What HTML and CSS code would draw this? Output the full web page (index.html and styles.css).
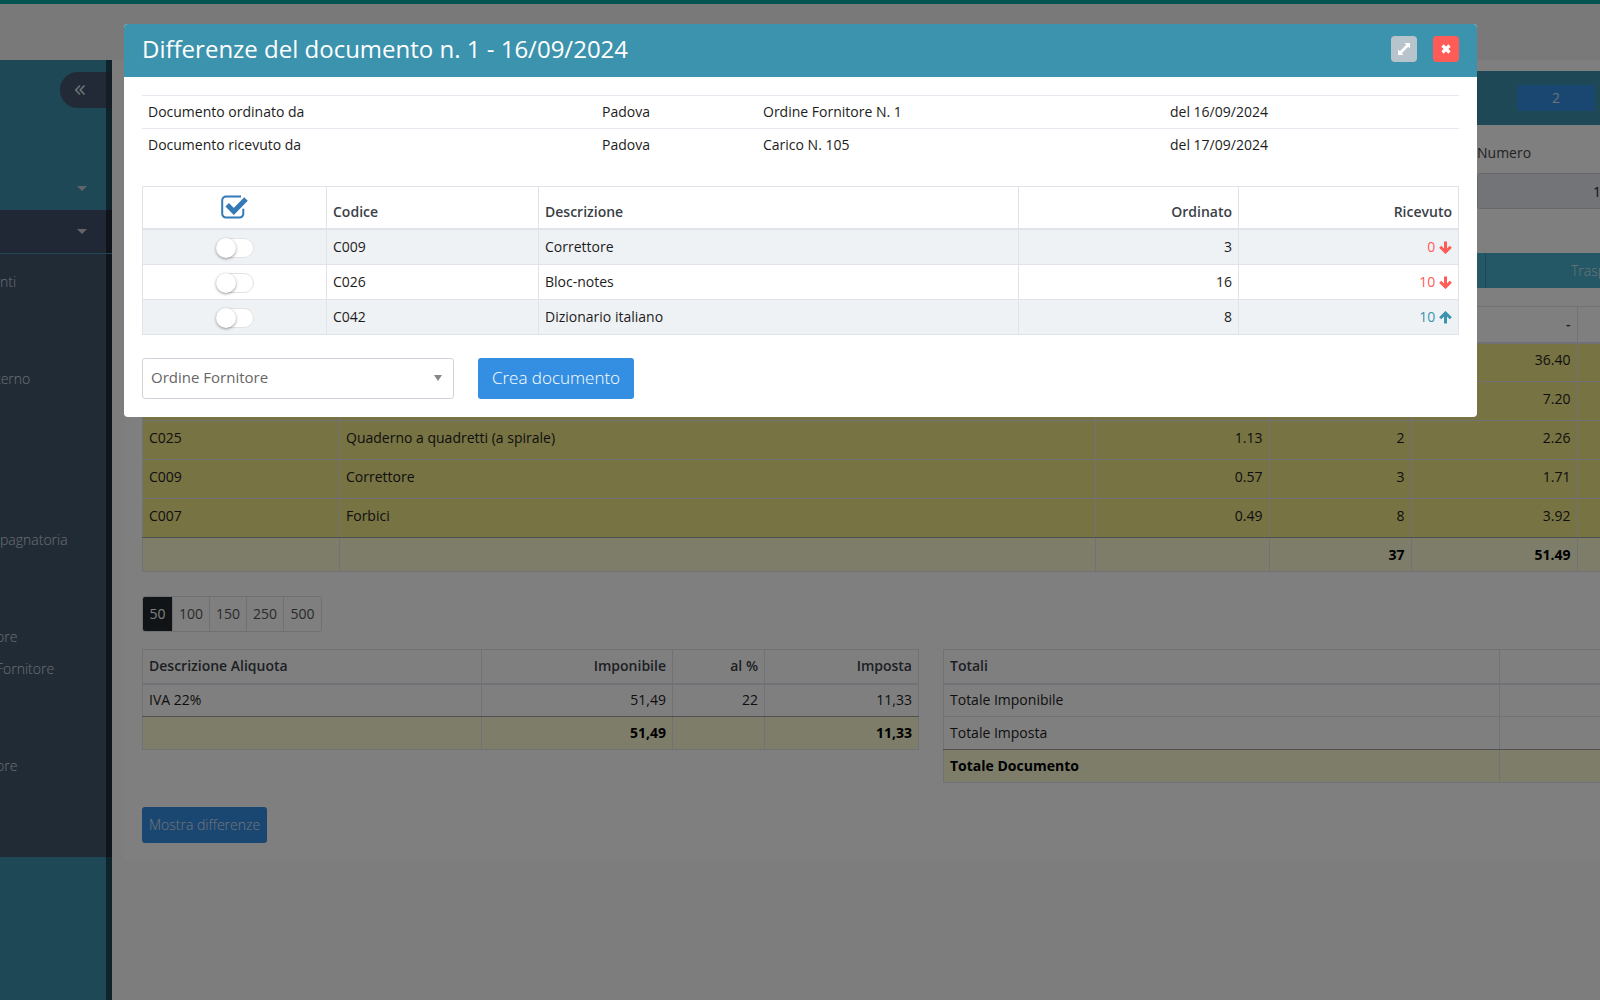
FILE: index.html
```html
<!DOCTYPE html>
<html lang="it">
<head>
<meta charset="utf-8">
<title>Differenze del documento</title>
<link rel="stylesheet" href="styles.css">
</head>
<body>
<header class="topbar"></header>
<div class="layout">
  <nav class="sidebar">
    <div class="side-top">
      <button class="collapse" aria-label="Comprimi menu">
        <svg width="12" height="12" viewBox="0 0 12 12"><path d="M6 1.500 1.800 6 6 10.500M10.500 1.500 6.300 6 10.500 10.500" fill="none" stroke="currentColor" stroke-width="1.800"/></svg>
      </button>
      <div class="side-group"><span class="caret"></span></div>
    </div>
    <div class="side-group side-open"><span class="caret"></span></div>
    <ul class="side-menu">
      <li class="r1"><a href="#">nti</a></li>
      <li class="r4"><a href="#">terno</a></li>
      <li class="r9"><a href="#">pagnatoria</a></li>
      <li class="r12"><a href="#">ore</a></li>
      <li class="r13"><a href="#">Fornitore</a></li>
      <li class="r16"><a href="#">ore</a></li>
    </ul>
  </nav>

  <main class="content">
    <section class="panel">
      <div class="panel-head"><button class="btn-count">2</button></div>
      <div class="panel-body">
        <div class="form-row">
          <div class="field">
            <label for="numero">Numero</label>
            <input id="numero" type="text" value="1" readonly>
          </div>
        </div>
        <div class="tabs"><a class="tab" href="#">Trasp</a></div>

        <table class="grid items">
          <colgroup><col class="c-code"><col><col class="c-price"><col class="c-qty"><col class="c-total"><col class="c-rest"></colgroup>
          <thead><tr><th></th><th></th><th></th><th></th><th class="num">-</th><th></th></tr></thead>
          <tbody>
            <tr><td></td><td></td><td></td><td></td><td class="num">36.40</td><td></td></tr>
            <tr><td></td><td></td><td></td><td></td><td class="num">7.20</td><td></td></tr>
            <tr><td>C025</td><td>Quaderno a quadretti (a spirale)</td><td class="num">1.13</td><td class="num">2</td><td class="num">2.26</td><td></td></tr>
            <tr><td>C009</td><td>Correttore</td><td class="num">0.57</td><td class="num">3</td><td class="num">1.71</td><td></td></tr>
            <tr><td>C007</td><td>Forbici</td><td class="num">0.49</td><td class="num">8</td><td class="num">3.92</td><td></td></tr>
          </tbody>
          <tfoot><tr><td></td><td></td><td></td><td class="num">37</td><td class="num">51.49</td><td></td></tr></tfoot>
        </table>

        <div class="pager">
          <button class="active">50</button><button>100</button><button>150</button><button>250</button><button>500</button>
        </div>

        <div class="summary">
          <table class="grid vat">
            <colgroup><col><col class="c-taxable"><col class="c-rate"><col class="c-tax"></colgroup>
            <thead><tr><th>Descrizione Aliquota</th><th class="num">Imponibile</th><th class="num">al %</th><th class="num">Imposta</th></tr></thead>
            <tbody><tr><td>IVA 22%</td><td class="num">51,49</td><td class="num">22</td><td class="num">11,33</td></tr></tbody>
            <tfoot><tr><td></td><td class="num">51,49</td><td></td><td class="num">11,33</td></tr></tfoot>
          </table>
          <table class="grid totals">
            <colgroup><col><col class="c-amount"></colgroup>
            <thead><tr><th>Totali</th><th></th></tr></thead>
            <tbody>
              <tr><td>Totale Imponibile</td><td></td></tr>
              <tr><td>Totale Imposta</td><td></td></tr>
            </tbody>
            <tfoot><tr><td>Totale Documento</td><td></td></tr></tfoot>
          </table>
        </div>

        <button class="btn-small">Mostra differenze</button>
      </div>
    </section>
  </main>
</div>

<div class="overlay">
  <section class="dialog" role="dialog" aria-labelledby="dialog-title">
    <header class="dialog-head">
      <h1 id="dialog-title">Differenze del documento n. 1 - 16/09/2024</h1>
      <button class="icon-btn" aria-label="Espandi">
        <svg width="12" height="12" viewBox="0 0 12 12"><path d="M6.500 0H12V5.500L10.200 3.700 3.700 10.200 5.500 12H0V6.500L1.800 8.300 8.300 1.800Z" fill="currentColor"/></svg>
      </button>
      <button class="icon-btn close" aria-label="Chiudi">
        <svg width="10" height="10" viewBox="0 0 10 10"><path d="M1.500 1.500 8.500 8.500M8.500 1.500 1.500 8.500" stroke="currentColor" stroke-width="3.200"/></svg>
      </button>
    </header>
    <div class="dialog-body">
      <table class="docs">
        <colgroup><col class="d-label"><col class="d-place"><col class="d-doc"><col></colgroup>
        <tbody>
          <tr><td>Documento ordinato da</td><td>Padova</td><td>Ordine Fornitore N. 1</td><td>del 16/09/2024</td></tr>
          <tr><td>Documento ricevuto da</td><td>Padova</td><td>Carico N. 105</td><td>del 17/09/2024</td></tr>
        </tbody>
      </table>

      <table class="grid diff">
        <colgroup><col class="f-pick"><col class="f-code"><col><col class="f-qty"><col class="f-qty"></colgroup>
        <thead>
          <tr>
            <th class="pick">
              <button class="check-all" aria-label="Seleziona tutto">
                <svg width="27" height="24" viewBox="0 0 27 24"><path d="M20 1.500H5a3.800 3.800 0 0 0-3.800 3.800v13.500a3.800 3.800 0 0 0 3.800 3.800h13.500a3.800 3.800 0 0 0 3.800-3.800v-5" fill="none" stroke="currentColor" stroke-width="2"/><path d="M6.200 9.800 12.800 16.400 25 4" fill="none" stroke="currentColor" stroke-width="5"/></svg>
              </button>
            </th>
            <th>Codice</th><th>Descrizione</th><th class="num">Ordinato</th><th class="num">Ricevuto</th>
          </tr>
        </thead>
        <tbody>
          <tr><td class="pick"><input type="checkbox" class="switch" aria-label="C009"></td><td>C009</td><td>Correttore</td><td class="num">3</td><td class="num less">0 <svg width="13" height="13" viewBox="0 0 13 13"><path d="M6.500 .5V11M1.200 5.800 6.500 11 11.800 5.800" fill="none" stroke="currentColor" stroke-width="3"/></svg></td></tr>
          <tr><td class="pick"><input type="checkbox" class="switch" aria-label="C026"></td><td>C026</td><td>Bloc-notes</td><td class="num">16</td><td class="num less">10 <svg width="13" height="13" viewBox="0 0 13 13"><path d="M6.500 .5V11M1.200 5.800 6.500 11 11.800 5.800" fill="none" stroke="currentColor" stroke-width="3"/></svg></td></tr>
          <tr><td class="pick"><input type="checkbox" class="switch" aria-label="C042"></td><td>C042</td><td>Dizionario italiano</td><td class="num">8</td><td class="num more">10 <svg width="13" height="13" viewBox="0 0 13 13"><path d="M6.500 12.500V2M1.200 7.200 6.500 2 11.800 7.200" fill="none" stroke="currentColor" stroke-width="3"/></svg></td></tr>
        </tbody>
      </table>

      <div class="actions">
        <div class="select-box">
          <select aria-label="Tipo documento"><option>Ordine Fornitore</option></select>
        </div>
        <button class="btn-primary">Crea documento</button>
      </div>
    </div>
  </section>
</div>
</body>
</html>
```
FILE: styles.css
```css
* { box-sizing: border-box; }

body {
  margin: 0;
  min-height: 100vh;
  display: flex;
  flex-direction: column;
  overflow: hidden;
  background: #fafafa;
  color: #1c1c1c;
  font: 14px/20px "Open Sans", sans-serif;
}

button, input, select { font: inherit; color: inherit; margin: 0; }
button { border: 0; cursor: pointer; padding: 0; }
a { color: inherit; text-decoration: none; }
svg { display: block; }

.topbar { height: 60px; background: #f2f2f2; border-top: 4px solid #06a8a2; }
.layout { flex: 1; display: flex; }

/* Sidebar */
.sidebar {
  width: 112px;
  background: linear-gradient(to left, rgba(0, 0, 0, .5) 6px, transparent 6px), #3c90aa;
  color: #d8dce0;
  overflow: hidden;
}
.side-top { padding-top: 12px; height: 150px; display: flex; flex-direction: column; align-items: flex-end; justify-content: space-between; }
.collapse {
  width: 52px;
  height: 36px;
  padding-left: 14px;
  border-radius: 18px 0 0 18px;
  background: linear-gradient(to left, rgba(0, 0, 0, .3) 6px, transparent 6px), #42546c;
}
.side-group { width: 100%; height: 43px; padding-right: 25px; display: flex; align-items: center; justify-content: flex-end; }
.side-open { background: linear-gradient(to left, rgba(0, 0, 0, .5) 6px, transparent 6px), #40506a; }
.caret { border: 5px solid transparent; border-top: 5px solid #c4c8cc; border-bottom: 0; }
.side-menu {
  list-style: none;
  margin: 0;
  padding: 12px 0 10px;
  height: 604px;
  border-top: 1px solid #3c90aa;
  display: grid;
  grid-template-rows: repeat(18, 1fr);
  align-items: center;
  white-space: nowrap;
  font-weight: 300;
  background: linear-gradient(to left, rgba(0, 0, 0, .5) 6px, transparent 6px), #42566c;
}
.r1 { grid-row: 1; }
.r4 { grid-row: 4; }
.r9 { grid-row: 9; }
.r12 { grid-row: 12; }
.r13 { grid-row: 13; }
.r16 { grid-row: 16; }
.r4 a, .r12 a, .r13 a, .r16 a { margin-left: -4px; }

/* Page content */
.content { flex: 1; min-width: 0; padding: 0 0 0 12px; overflow: hidden; }
.panel { background: #fff; padding-top: 11px; }
.panel-head { height: 54px; padding: 0 5px; display: flex; align-items: center; justify-content: flex-end; background: #3c90aa; }
.btn-count { width: 78px; height: 26px; border-radius: 3px; background: #348ce4; color: #d8e6f4; }
.panel-body { padding: 18px 0 17px 18px; }
.form-row { display: flex; justify-content: flex-end; margin-right: -10px; }
.field { width: 133px; display: flex; flex-direction: column; gap: 10px; color: #444; }
.field input { width: 100%; height: 36px; padding: 0 8px; border: 1px solid #ccd0d8; border-radius: 3px; background: #e6e8ee; color: #1c1c1c; text-align: right; }
.tabs { margin-top: 44px; height: 35px; display: flex; justify-content: flex-end; background: #48b0ce; color: #d8e6ea; font-weight: 300; }
.tab { width: 115px; padding: 8px 0 0 85px; border-left: 1px solid #3c90aa; overflow: hidden; }

/* Tables */
table { border-collapse: collapse; table-layout: fixed; width: 100%; }
td, th { padding: 0 6px; text-align: left; }
.grid td, .grid th { border: 1px solid #e0e4ea; }
.grid th { font-weight: 600; color: #3a3f48; border-bottom-width: 2px; }
.grid .num { text-align: right; }
.grid tfoot td { background: #fafad2; font-weight: 700; color: #000; }
.grid tr { height: 33px; }

.items { margin-top: 18px; }
.items thead tr { height: 36px; }
.items tbody tr { height: 39px; }
.items tbody td { padding-bottom: 4px; background: #eee686; border-color: #e2e4f0; }
.items tr > :last-child { border-right: 0; }
.items tfoot tr { height: 34px; }
.items tbody tr:last-child td, .summary tbody tr:last-child td { border-bottom-color: #a0a0a0; }
.c-code { width: 197px; }
.c-price { width: 174px; }
.c-qty { width: 142px; }
.c-total { width: 166px; }
.c-rest { width: 23px; }

.pager { margin-top: 24px; width: max-content; display: flex; border: 1px solid #e0e0e0; border-radius: 3px; overflow: hidden; }
.pager button { width: 37px; height: 34px; border-right: 1px solid #e0e0e0; background: #fff; color: #555; }
.pager button:last-child { border-right: 0; }
.pager .active { width: 30px; background: #20282e; color: #fff; }

.summary { margin-top: 17px; display: flex; align-items: flex-start; gap: 24px; }
.summary thead tr { height: 34px; }
.vat { flex: 0 0 777px; width: 777px; }
.c-taxable { width: 191px; }
.c-rate { width: 92px; }
.c-tax { width: 154px; }
.totals { flex: 1; width: auto; }
.totals tr > :last-child { border-right: 0; }
.c-amount { width: 101px; }

.btn-small { margin-top: 24px; height: 36px; padding: 0 7px; border-radius: 3px; background: #348ce4; color: #e2e8ee; font-weight: 300; }

/* Dialog */
.overlay { position: fixed; inset: 0; padding: 24px 123px 0 124px; background: rgba(0, 0, 0, .5); }
.dialog { border-radius: 4px; overflow: hidden; background: #fff; }
.dialog-head { height: 53px; padding: 0 18px 3px; display: flex; align-items: center; gap: 16px; background: #3c93ad; color: #fff; }
.dialog-head h1 { flex: 1; margin: 0; font-size: 24px; line-height: 32px; font-weight: 400; }
.icon-btn { width: 26px; height: 26px; border-radius: 4px; display: grid; place-items: center; background: #b8c4cc; }
.icon-btn.close { background: #ff5b57; }
.dialog-body { padding: 18px; }

.docs tr { height: 33px; border-top: 1px solid #e6eaf0; }
.d-label { width: 454px; }
.d-place { width: 161px; }
.d-doc { width: 407px; }

.diff { margin-top: 24px; }
.diff thead tr { height: 43px; }
.diff thead th { vertical-align: bottom; padding-bottom: 6px; }
.diff thead .pick { vertical-align: top; padding-top: 8px; padding-bottom: 0; }
.diff tbody tr { height: 35px; }
.diff tbody tr:nth-child(odd) { background: #eff2f5; }
.f-pick { width: 184px; }
.f-code { width: 212px; }
.f-qty { width: 220px; }
.check-all { display: block; margin: 0 auto; background: none; color: #337ab7; }
.less { color: #ff5b57; }
.more { color: #3c93ad; }
td svg { display: inline-block; vertical-align: -2px; }

.switch {
  appearance: none;
  display: block;
  width: 38px;
  height: 20px;
  margin: 3px auto 0;
  border: 1px solid #e2e2e2;
  border-radius: 10px;
  background: #fff;
}
.switch::before {
  content: "";
  display: block;
  width: 20px;
  height: 20px;
  margin: -1px;
  border-radius: 50%;
  background: #fff;
  box-shadow: 0 1px 3px rgba(0, 0, 0, .4);
}

.actions { margin-top: 23px; display: flex; gap: 24px; }
.select-box { position: relative; width: 312px; }
.select-box::after {
  content: "";
  position: absolute;
  right: 12px;
  top: 17px;
  border: 4px solid transparent;
  border-top: 6px solid #888;
  border-bottom: 0;
}
.select-box select { appearance: none; width: 100%; height: 41px; padding: 0 8px 2px; border: 1px solid #d0d4da; border-radius: 3px; background: #fff; color: #666; font-size: 15px; }
.btn-primary { width: 156px; height: 41px; border-radius: 3px; background: #348fe2; color: #fff; font-size: 17px; font-weight: 300; }
```
